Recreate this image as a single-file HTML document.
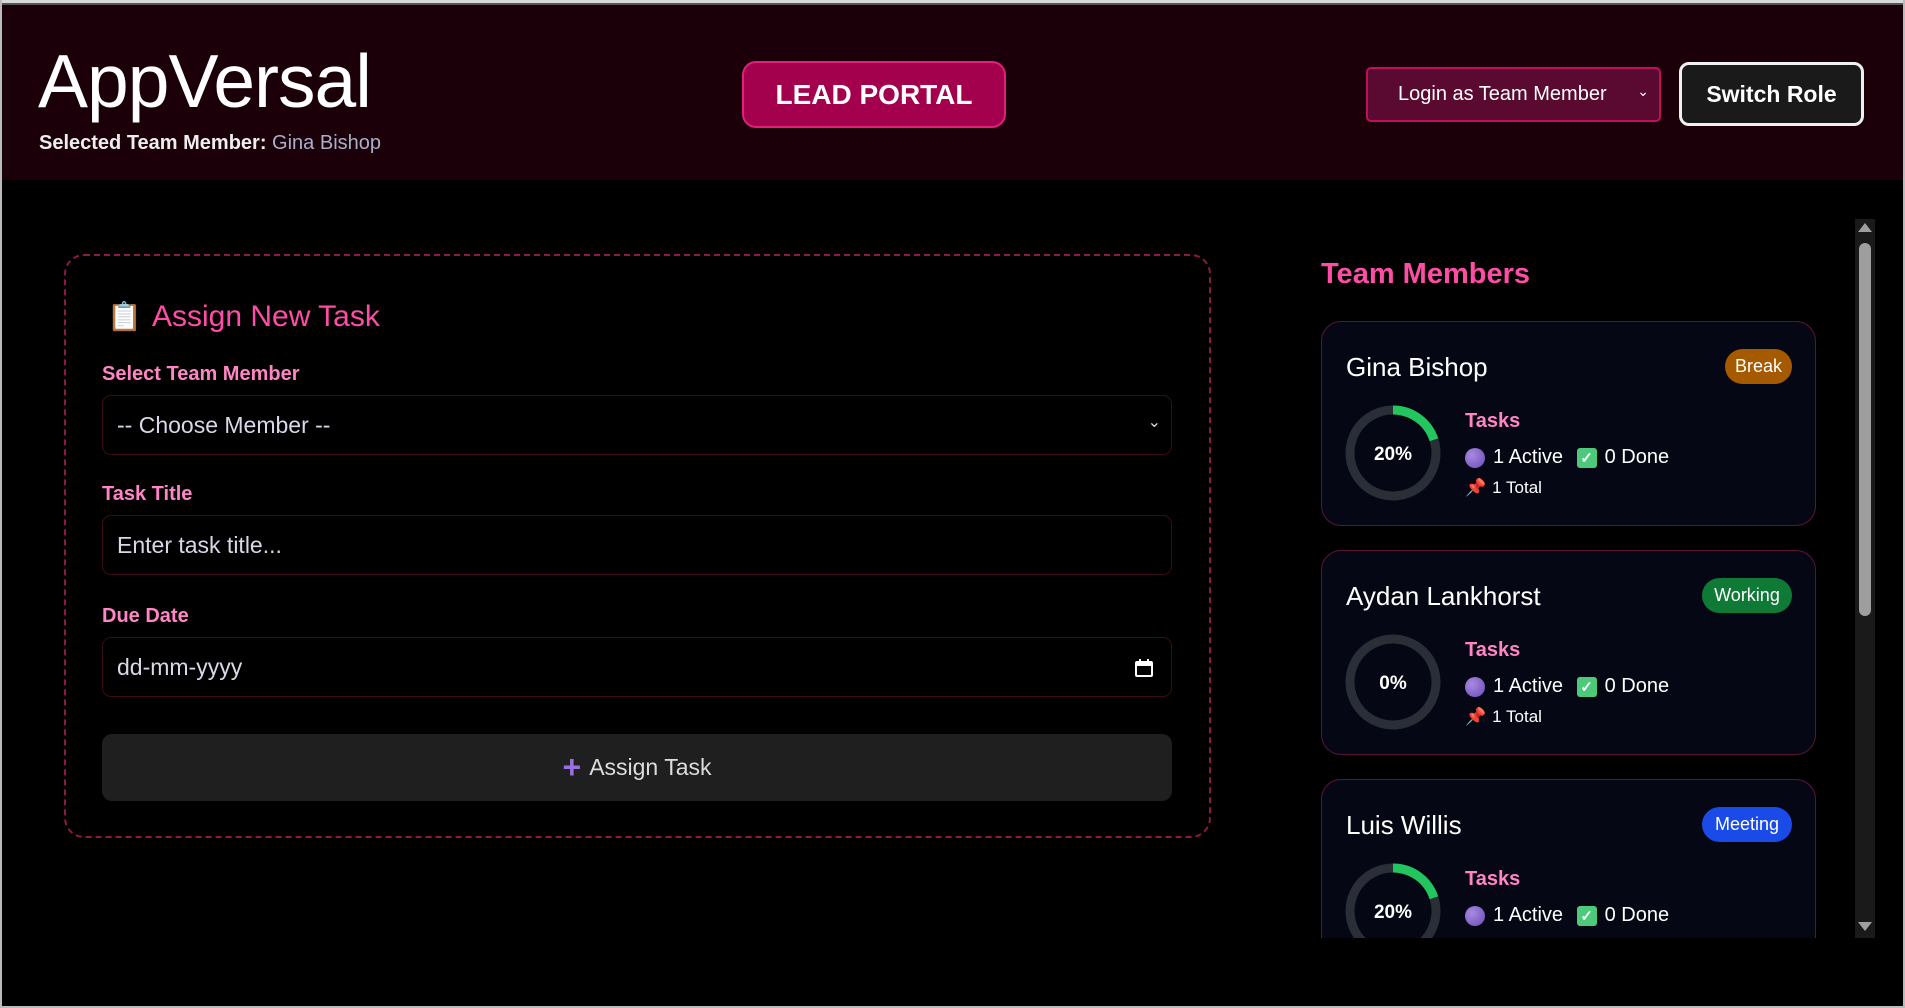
<!DOCTYPE html>
<html><head><meta charset="utf-8"><style>
*{box-sizing:border-box;margin:0;padding:0}
html,body{width:1905px;height:1008px;overflow:hidden}
body{background:#000;font-family:"Liberation Sans",sans-serif;position:relative;color:#fff}
.a{position:absolute}
.hdr{left:2px;top:5px;width:1901px;height:175px;background:#1b0009}
.topline{left:0;top:0;width:1905px;height:5px;background:#d9d9d9;border-bottom:2px solid #555}
.frame{left:0;top:0;width:1905px;height:1008px;border:2px solid #bbb;border-top:none;pointer-events:none}
.lbl{color:#ff85c4;font-size:20px;font-weight:bold;left:102px}
.inp{left:102px;width:1070px;height:60px;border:1px solid #3a0a20;border-radius:9px;background:#000;color:#d8d8e8;font-size:23px;padding-left:14px;display:flex;align-items:center}
.card{left:1321px;width:495px;height:205px;background:#050814;border:1px solid #5a1535;border-radius:20px}
.name{left:24px;top:30px;font-size:26px;color:#fff}
.badge{top:27px;height:35px;border-radius:18px;font-size:18px;color:#fff;display:flex;align-items:center;justify-content:center}
.ring{left:22px;top:82px}
.tk{left:143px;top:88px;color:#ff85c4;font-size:20px;font-weight:bold}
.row{left:143px;top:124px;font-size:20px;display:flex;align-items:center;gap:8px}
.tot{left:143px;top:156px;font-size:17px;display:flex;align-items:center;gap:6px}
.dot{width:20px;height:20px;border-radius:50%;background:radial-gradient(circle at 35% 35%,#a88ae0,#6a4ab8)}
.chk{width:20px;height:20px;border-radius:3px;background:#4cc97a;color:#fff;font-size:15px;display:flex;align-items:center;justify-content:center;font-weight:bold}
</style></head><body>
<div class="a topline"></div>
<div class="a hdr"></div>
<div class="a" style="left:38px;top:38px;font-size:75px;letter-spacing:-1px;color:#fff">AppVersal</div>
<div class="a" style="left:39px;top:132px;font-size:20px;font-weight:bold;color:#eee">Selected Team Member: <span style="font-weight:normal;color:#a8b0c8">Gina Bishop</span></div>
<div class="a" style="left:742px;top:61px;width:264px;height:67px;background:#a3004d;border:2px solid #e0207a;border-radius:14px;font-size:28px;font-weight:bold;display:flex;align-items:center;justify-content:center">LEAD PORTAL</div>
<div class="a" style="left:1366px;top:67px;width:295px;height:55px;background:#5a0a30;border:2px solid #c0105a;border-radius:5px;font-size:20px;display:flex;align-items:center;padding-left:30px">Login as Team Member<span style="position:absolute;right:10px;top:14px;font-size:14px">&#8964;</span></div>
<div class="a" style="left:1679px;top:62px;width:185px;height:64px;background:#1a1a1a;border:3px solid #f0f0f0;border-radius:10px;font-size:23px;font-weight:bold;display:flex;align-items:center;justify-content:center">Switch Role</div>

<div class="a" style="left:64px;top:254px;width:1147px;height:584px;border:2px dashed #8a1a4a;border-radius:20px"></div>
<div class="a" style="left:107px;top:300px;font-size:28px">📋</div>
<div class="a" style="left:152px;top:300px;font-size:30px;color:#ff4da6">Assign New Task</div>
<div class="a lbl" style="top:363px">Select Team Member</div>
<div class="a inp" style="top:395px">-- Choose Member --<span style="position:absolute;right:10px;top:16px;font-size:16px">&#8964;</span></div>
<div class="a lbl" style="top:483px">Task Title</div>
<div class="a inp" style="top:515px">Enter task title...</div>
<div class="a lbl" style="top:605px">Due Date</div>
<div class="a inp" style="top:637px">dd-mm-yyyy
<svg style="position:absolute;right:17px;top:20px" width="20" height="20" viewBox="0 0 20 20"><rect x="2" y="4" width="16" height="14" rx="1" fill="none" stroke="#fff" stroke-width="2"/><rect x="2" y="4" width="16" height="4" fill="#fff"/><rect x="5" y="1" width="2" height="4" fill="#fff"/><rect x="13" y="1" width="2" height="4" fill="#fff"/></svg></div>
<div class="a" style="left:102px;top:734px;width:1070px;height:67px;background:#1f1f1f;border-radius:10px;display:flex;align-items:center;justify-content:center;font-size:23px;color:#ddd"><span style="color:#9a70e0;font-size:32px;font-weight:bold;margin-right:8px">+</span>Assign Task</div>

<div class="a" style="left:1321px;top:258px;font-size:29px;font-weight:bold;color:#ff4da6">Team Members</div>

<div class="a card" style="top:321px">
 <div class="a name">Gina Bishop</div>
 <div class="a badge" style="left:403px;width:67px;background:#a55a00">Break</div>
 <svg class="a ring" width="98" height="98" viewBox="0 0 98 98"><circle cx="49" cy="49" r="43" fill="none" stroke="#2a2e36" stroke-width="9"/><circle cx="49" cy="49" r="43" fill="none" stroke="#22c55e" stroke-width="9" stroke-dasharray="54 300" transform="rotate(-90 49 49)"/><text x="49" y="56" text-anchor="middle" font-family="Liberation Sans" font-weight="bold" font-size="19" fill="#fff">20%</text></svg>
 <div class="a tk">Tasks</div>
 <div class="a row"><span class="dot"></span>1 Active&nbsp;<span class="chk">✓</span>0 Done</div>
 <div class="a tot"><span style="color:#e83060">📌</span>1 Total</div>
</div>
<div class="a card" style="top:550px">
 <div class="a name">Aydan Lankhorst</div>
 <div class="a badge" style="left:380px;width:90px;background:#0e7a35">Working</div>
 <svg class="a ring" width="98" height="98" viewBox="0 0 98 98"><circle cx="49" cy="49" r="43" fill="none" stroke="#2a2e36" stroke-width="9"/><text x="49" y="56" text-anchor="middle" font-family="Liberation Sans" font-weight="bold" font-size="19" fill="#fff">0%</text></svg>
 <div class="a tk">Tasks</div>
 <div class="a row"><span class="dot"></span>1 Active&nbsp;<span class="chk">✓</span>0 Done</div>
 <div class="a tot"><span style="color:#e83060">📌</span>1 Total</div>
</div>
<div class="a" style="left:1310px;top:779px;width:520px;height:159px;overflow:hidden">
<div class="a card" style="left:11px;top:0">
 <div class="a name">Luis Willis</div>
 <div class="a badge" style="left:380px;width:90px;background:#1a4ae8">Meeting</div>
 <svg class="a ring" width="98" height="98" viewBox="0 0 98 98"><circle cx="49" cy="49" r="43" fill="none" stroke="#2a2e36" stroke-width="9"/><circle cx="49" cy="49" r="43" fill="none" stroke="#22c55e" stroke-width="9" stroke-dasharray="54 300" transform="rotate(-90 49 49)"/><text x="49" y="56" text-anchor="middle" font-family="Liberation Sans" font-weight="bold" font-size="19" fill="#fff">20%</text></svg>
 <div class="a tk">Tasks</div>
 <div class="a row"><span class="dot"></span>1 Active&nbsp;<span class="chk">✓</span>0 Done</div>
</div>
</div>
<div class="a" style="left:1855px;top:219px;width:20px;height:719px;background:#1a1a1a"></div>
<div class="a" style="left:1859px;top:243px;width:12px;height:373px;background:#9e9e9e;border-radius:6px"></div>
<div class="a" style="left:1858px;top:223px;width:0;height:0;border-left:7px solid transparent;border-right:7px solid transparent;border-bottom:9px solid #9e9e9e"></div>
<div class="a" style="left:1858px;top:922px;width:0;height:0;border-left:7px solid transparent;border-right:7px solid transparent;border-top:9px solid #9e9e9e"></div>
<div class="a frame"></div>
</body></html>
